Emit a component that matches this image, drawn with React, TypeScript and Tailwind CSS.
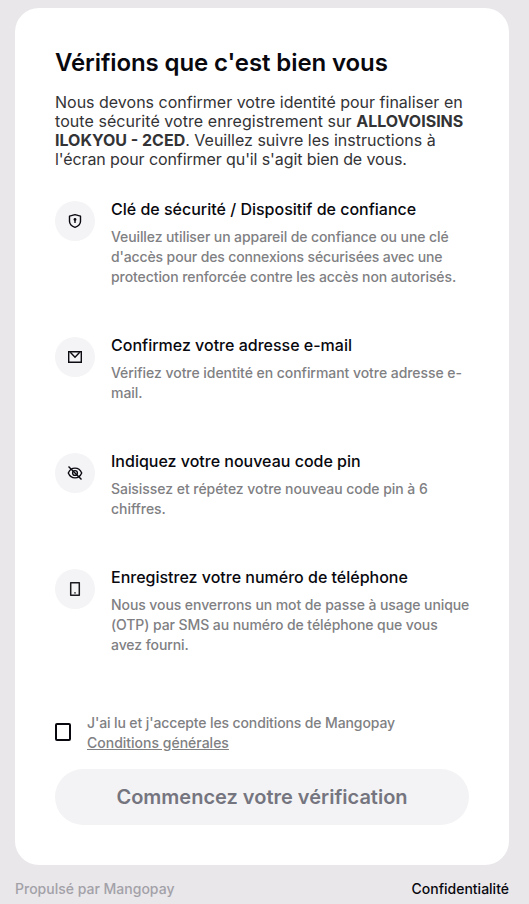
import { ReactNode } from "react";

interface StepProps {
  icon: ReactNode;
  title: string;
  children: ReactNode;
}

function ShieldIcon() {
  return (
    <svg className="w-4 h-4" viewBox="0 0 16 16" fill="none" stroke="#0b0b12" strokeWidth="1.4" strokeLinejoin="round">
      <path d="M8 1.6 13.5 3.2v5c0 3.1-2.3 4.9-5.5 6.1-3.2-1.2-5.5-3-5.5-6.1v-5z" />
      <path d="M8 6v4" strokeWidth="1.4" />
      <circle cx="8" cy="6.4" r="1.4" fill="#0b0b12" stroke="none" />
    </svg>
  );
}

function MailIcon() {
  return (
    <svg className="w-4 h-4" viewBox="0 0 16 16" fill="none" stroke="#0b0b12" strokeWidth="1.4">
      <path d="M1.7 2.7h12.6v10.6H1.7z" />
      <path d="m3.3 3.3 4.7 4.9 4.7-4.9" />
    </svg>
  );
}

function EyeOffIcon() {
  return (
    <svg className="w-4 h-4" viewBox="0 0 16 16" fill="none" stroke="#0b0b12" strokeWidth="1.4">
      <path d="M1.3 8C2.6 4.9 5 3.1 8 3.1s5.4 1.8 6.7 4.9c-1.3 3.1-3.7 4.9-6.7 4.9S2.6 11.1 1.3 8z" />
      <circle cx="8" cy="8" r="2.4" />
      <path d="m1.5 1.500 13 13" />
    </svg>
  );
}

function PhoneIcon() {
  return (
    <svg className="w-4 h-4" viewBox="0 0 16 16" fill="none" stroke="#1b1b20" strokeWidth="1.5" strokeLinejoin="round">
      <path d="M3.7 1.7h8.6v12.6H3.7z" />
      <path d="M7.2 11.8h1.6" strokeWidth="1.3" />
    </svg>
  );
}

function Step({ icon, title, children }: StepProps) {
  return (
    <div className="flex gap-4">
      <div className="w-10 h-10 shrink-0 rounded-full bg-[#f4f4f6] flex items-center justify-center">{icon}</div>
      <div className="flex-1 min-w-0">
        <h2 className="text-base leading-4 font-medium text-[#08080e] mb-2.5">{title}</h2>
        <p className="text-sm leading-5 font-medium text-[#808083] whitespace-nowrap">{children}</p>
      </div>
    </div>
  );
}

export default function App() {
  return (
    <div className="min-h-screen bg-[#e9e7ea] pt-2 pl-[15px] pr-5 font-['Inter',sans-serif]">
      <main className="h-[857px] bg-white rounded-3xl p-10">
        <h1 className="text-2xl leading-[29px] font-semibold tracking-[-0.1px] text-[#08080e]">Vérifions que c'est bien vous</h1>
        <p className="mt-4 text-base leading-[19px] text-[#333336] whitespace-nowrap">
          Nous devons confirmer votre identité pour finaliser en <br />
          <span className="tracking-[0.06px]">toute sécurité votre enregistrement sur </span>
          <b className="font-bold">ALLOVOISINS <br />ILOKYOU - 2CED</b>. Veuillez suivre les instructions à <br />
          <span className="tracking-[-0.1px]">l'écran pour confirmer qu'il s'agit bien de vous.</span>
        </p>

        <div className="mt-8 space-y-[50px]">
          <Step icon={<ShieldIcon />} title="Clé de sécurité / Dispositif de confiance">
            <span className="tracking-[-0.1px]">Veuillez utiliser un appareil de confiance ou une clé </span><br />
            <span className="tracking-[-0.13px]">d'accès pour des connexions sécurisées avec une </span><br />
            <span className="tracking-[-0.08px]">protection renforcée contre les accès non autorisés.</span>
          </Step>
          <Step icon={<MailIcon />} title="Confirmez votre adresse e-mail">
            <span className="tracking-[-0.05px]">Vérifiez votre identité en confirmant votre adresse e-<br />mail.</span>
          </Step>
          <Step icon={<EyeOffIcon />} title="Indiquez votre nouveau code pin">
            <span className="tracking-[-0.05px]">Saisissez et répétez votre nouveau code pin à 6 <br />chiffres.</span>
          </Step>
          <Step icon={<PhoneIcon />} title="Enregistrez votre numéro de téléphone">
            <span className="tracking-[-0.08px]">
              Nous vous enverrons un mot de passe à usage unique <br />(OTP) par SMS au numéro de téléphone que vous <br />avez fourni.
            </span>
          </Step>
        </div>

        <label className="mt-[58px] flex items-center gap-4">
          <input type="checkbox" className="appearance-none w-4 h-[18px] mb-0.5 shrink-0 border-2 border-[#08080e] rounded-xs" />
          <span className="text-sm leading-5 font-medium text-[#808083]">
            <span className="tracking-[-0.12px]">J'ai lu et j'accepte les conditions de Mangopay</span>
            <br />
            <a className="underline">Conditions générales</a>
          </span>
        </label>

        <button className="mt-4 w-full h-14 rounded-full bg-[#f3f3f5] text-xl font-semibold text-[#75757f]" disabled>
          Commencez votre vérification
        </button>
      </main>

      <footer className="mt-3.5 flex justify-between text-sm leading-5 font-medium">
        <span className="text-[#a3a1a8]">Propulsé par Mangopay</span>
        <a className="text-[#08080e]">Confidentialité</a>
      </footer>
    </div>
  );
}
